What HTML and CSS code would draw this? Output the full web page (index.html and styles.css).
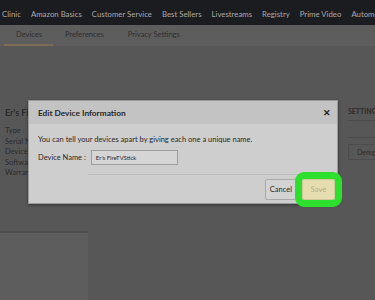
FILE: index.html
```html
<!DOCTYPE html>
<html lang="en">
  <head>
    <meta charset="UTF-8" />
    <title>Edit Device Information</title>
    <link rel="stylesheet" href="styles.css">
  </head>
  <body>
    <div class="nav">
      <span>Clinic</span>
      <span>Amazon Basics</span>
      <span>Customer Service</span>
      <span>Best Sellers</span>
      <span>Livestreams</span>
      <span>Registry</span>
      <span>Prime Video</span>
      <span>Automotive</span>
    </div>

    <div class="tabs">
      <span class="tab active">Devices</span>
      <span class="tab">Preferences</span>
      <span class="tab">Privacy Settings</span>
    </div>

    <div class="main">
      <div class="device">
        <h2>Er's Fire TV Stick</h2>
        <p>Type :</p>
        <p>Serial Number :</p>
        <p>Device Actions</p>
        <p>Software Version :</p>
        <p>Warranty :</p>
        <div class="lower"></div>
      </div>
      <div class="settings">
        <h3>SETTINGS</h3>
        <div class="rule"></div>
        <div class="deregister">Deregister</div>
      </div>
    </div>

    <div class="dialog">
      <div class="dialog-head">
        <span>Edit Device Information</span>
        <span class="close">&#x2715;</span>
      </div>
      <div class="dialog-body">
        <p>You can tell your devices apart by giving each one a unique name.</p>
        <div class="field">
          <label>Device Name :</label>
          <div class="input">Er's FireTVStick</div>
        </div>
      </div>
      <div class="dialog-foot">
        <span class="btn">Cancel</span>
        <span class="btn save">Save</span>
      </div>
    </div>
  </body>
</html>
```

FILE: styles.css
```css
* {
  padding: 0;
  margin: 0;
  box-sizing: border-box;
}

html,
body {
  width: 100%;
  height: 100%;
  overflow: hidden;
}

body {
  background-color: #585758;
  font-family: Lato, "Liberation Sans", sans-serif;
  position: relative;
}

.nav {
  height: 25px;
  background-color: #1b1c1f;
  display: flex;
  align-items: center;
  gap: 10px;
  padding: 2px 0 0 2px;
  color: #a9aaab;
  font-size: 7.8px;
  white-space: nowrap;
  overflow: hidden;
}

.tabs {
  height: 21px;
  background-color: #5d5d5e;
  display: flex;
  align-items: center;
  padding-left: 4px;
  font-size: 7.5px;
  color: #2e2e2e;
}

.tab {
  line-height: 18px;
  padding: 0 12px;
  border-bottom: 2px solid transparent;
}

.tab.active {
  padding: 0 11px 0 12px;
  border-bottom-color: #7d6d54;
}

.main {
  display: flex;
  justify-content: space-between;
  padding-top: 61px;
}

.device {
  width: 88px;
  padding-left: 5px;
  color: #2b2b2b;
  font-size: 7.5px;
}

.device h2 {
  font-size: 9px;
  font-weight: bold;
  white-space: nowrap;
  margin-bottom: 8px;
}

.device p {
  line-height: 10.5px;
  white-space: nowrap;
}

.lower {
  margin: 52px 0 0 -5px;
  height: 80px;
  background-color: #5e5d5e;
  border-top: 2px solid #4f4e4f;
}

.settings {
  width: 27px;
  color: #2b2b2b;
  font-size: 7px;
  overflow: hidden;
  white-space: nowrap;
}

.settings h3 {
  font-size: 7px;
  font-weight: bold;
  padding-bottom: 5px;
  border-bottom: 1px solid #4b4b4b;
}

.rule {
  height: 17px;
  border-bottom: 1px solid #4b4b4b;
  margin-left: -4px;
}

.deregister {
  margin-top: 6px;
  padding: 3px 8px;
  border: 1px solid #4c4c4c;
  border-right: none;
  border-radius: 2px 0 0 2px;
}

.dialog {
  position: absolute;
  left: 28px;
  top: 100px;
  width: 310px;
  height: 104px;
  background-color: #cfcecf;
  border: 1px solid #9a9a9a;
  box-shadow: 0 1px 3px rgba(0, 0, 0, 0.4);
  color: #262626;
}

.dialog-head {
  height: 23px;
  background-color: #c4c3c4;
  display: flex;
  align-items: center;
  justify-content: space-between;
  padding: 0 6px 0 9px;
  font-size: 8.3px;
  font-weight: bold;
}

.close {
  font-size: 9px;
}

.dialog-body {
  padding: 11px 9px 0;
  font-size: 7.5px;
}

.field {
  display: flex;
  align-items: center;
  gap: 5px;
  margin-top: 6px;
  padding-bottom: 9px;
}

.input {
  width: 87px;
  height: 15px;
  padding-left: 4px;
  line-height: 14px;
  font-size: 6px;
  background-color: #d6d5d6;
  border: 1px solid #9d9d9d;
}

.dialog-foot {
  margin-left: 59px;
  border-top: 1px solid #bdbcbd;
  display: flex;
  justify-content: flex-end;
  gap: 5px;
  padding: 4px 2px 0 0;
}

.btn {
  font-size: 7.5px;
  line-height: 19px;
  padding: 0 4px;
  border: 1px solid #a9a9a9;
  border-radius: 2px;
  background-color: #d3d3d3;
}

.save {
  width: 33px;
  text-align: center;
  color: #b9ad86;
  background-color: #e5dcaf;
  border-color: #d2c79c;
  outline: 7px solid #2ee02e;
}
```
